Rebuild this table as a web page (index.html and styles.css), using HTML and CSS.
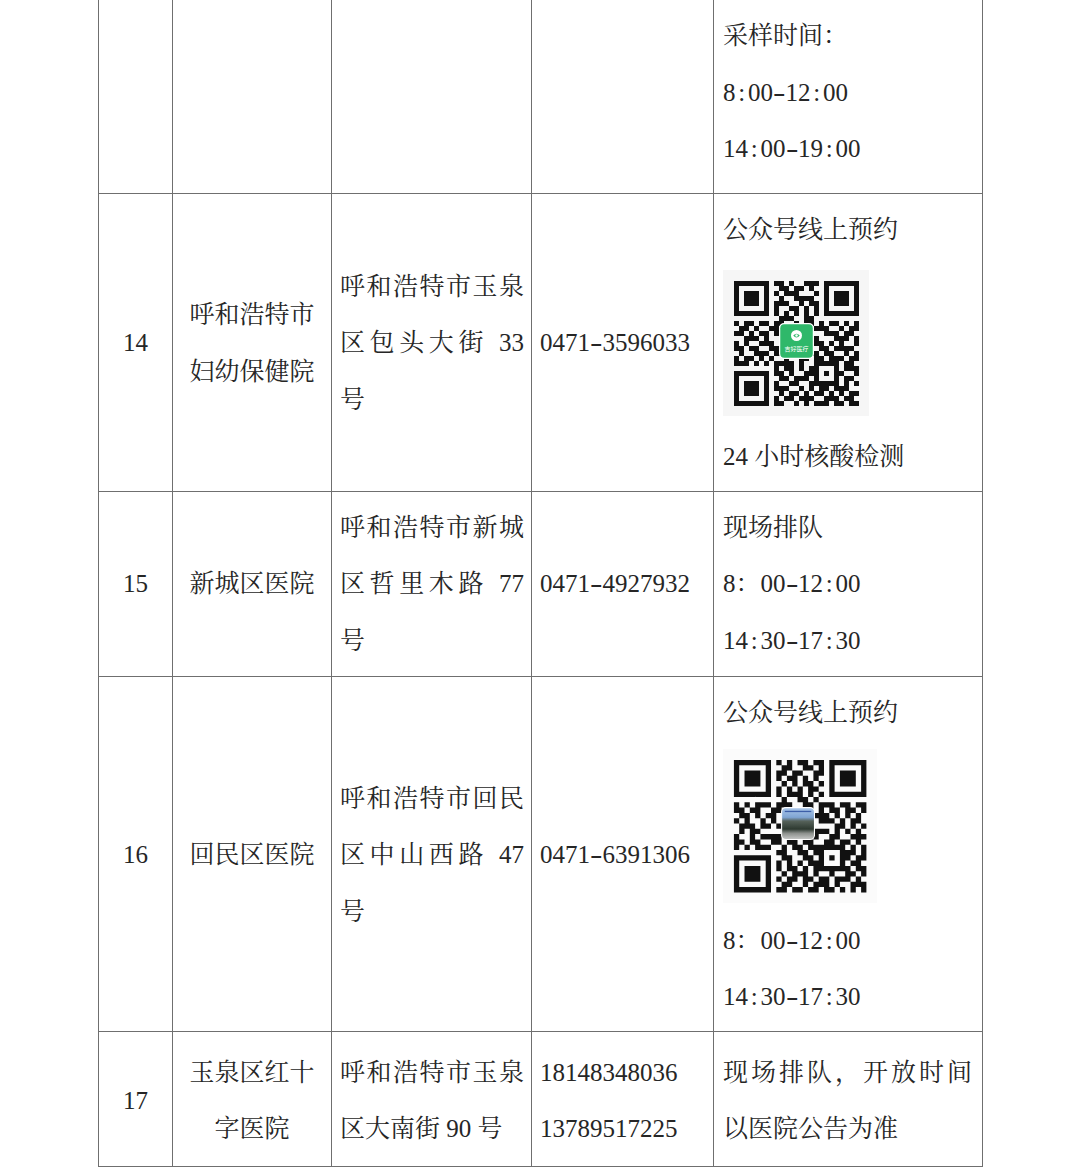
FILE: index.html
```html
<!DOCTYPE html>
<html lang="zh-CN">
<head>
<meta charset="utf-8">
<title>核酸检测机构</title>
<link rel="stylesheet" href="styles.css">
</head>
<body>
<table class="sheet">
  <colgroup>
    <col class="c-no"><col class="c-name"><col class="c-addr"><col class="c-tel"><col class="c-note">
  </colgroup>
  <tbody>
    <tr class="row-cont">
      <td class="no"></td>
      <td class="name"></td>
      <td class="addr"></td>
      <td class="tel"></td>
      <td class="note note-top">
        <p>采样时间：</p>
        <p>8<span class="sep">:</span>00<span class="sep dash">-</span>12<span class="sep">:</span>00</p>
        <p>14<span class="sep">:</span>00<span class="sep dash">-</span>19<span class="sep">:</span>00</p>
      </td>
    </tr>
    <tr class="row-qr">
      <td class="no">14</td>
      <td class="name">呼和浩特市妇幼保健院</td>
      <td class="addr">呼和浩特市玉泉区包头大街 33 号</td>
      <td class="tel">0471<span class="sep dash">-</span>3596033</td>
      <td class="note note-top">
        <p>公众号线上预约</p>
        <div class="qr qr-a">
          <svg width="146" height="146" viewBox="-2.2 -2.2 29.2 29.2">
            <rect x="-2.2" y="-2.2" width="29.2" height="29.2" fill="#f6f6f6"/>
            <path id="qr-modules" fill="#111" d="M0 0h7v1h-7zM8 0h2v1h-2zM11 0h1v1h-1zM14 0h3v1h-3zM18 0h7v1h-7zM0 1h1v1h-1zM6 1h1v1h-1zM9 1h2v1h-2zM12 1h2v1h-2zM15 1h1v1h-1zM18 1h1v1h-1zM24 1h1v1h-1zM0 2h1v1h-1zM2 2h3v1h-3zM6 2h1v1h-1zM8 2h1v1h-1zM10 2h3v1h-3zM16 2h1v1h-1zM18 2h1v1h-1zM20 2h3v1h-3zM24 2h1v1h-1zM0 3h1v1h-1zM2 3h3v1h-3zM6 3h1v1h-1zM9 3h1v1h-1zM12 3h4v1h-4zM18 3h1v1h-1zM20 3h3v1h-3zM24 3h1v1h-1zM0 4h1v1h-1zM2 4h3v1h-3zM6 4h1v1h-1zM8 4h3v1h-3zM13 4h1v1h-1zM15 4h2v1h-2zM18 4h1v1h-1zM20 4h3v1h-3zM24 4h1v1h-1zM0 5h1v1h-1zM6 5h1v1h-1zM8 5h1v1h-1zM11 5h2v1h-2zM14 5h1v1h-1zM16 5h1v1h-1zM18 5h1v1h-1zM24 5h1v1h-1zM0 6h7v1h-7zM8 6h1v1h-1zM10 6h1v1h-1zM12 6h1v1h-1zM14 6h1v1h-1zM16 6h1v1h-1zM18 6h7v1h-7zM9 7h3v1h-3zM14 7h2v1h-2zM0 8h1v1h-1zM2 8h2v1h-2zM5 8h2v1h-2zM8 8h2v1h-2zM12 8h1v1h-1zM14 8h2v1h-2zM17 8h1v1h-1zM19 8h2v1h-2zM22 8h1v1h-1zM24 8h1v1h-1zM1 9h2v1h-2zM4 9h1v1h-1zM7 9h2v1h-2zM10 9h2v1h-2zM13 9h1v1h-1zM16 9h3v1h-3zM21 9h1v1h-1zM23 9h2v1h-2zM0 10h2v1h-2zM3 10h1v1h-1zM5 10h2v1h-2zM8 10h2v1h-2zM11 10h2v1h-2zM14 10h2v1h-2zM18 10h3v1h-3zM22 10h2v1h-2zM2 11h3v1h-3zM6 11h1v1h-1zM9 11h2v1h-2zM12 11h2v1h-2zM15 11h2v1h-2zM20 11h3v1h-3zM24 11h1v1h-1zM0 12h1v1h-1zM2 12h1v1h-1zM5 12h3v1h-3zM9 12h1v1h-1zM12 12h3v1h-3zM16 12h2v1h-2zM19 12h1v1h-1zM21 12h1v1h-1zM24 12h1v1h-1zM0 13h2v1h-2zM3 13h2v1h-2zM7 13h2v1h-2zM10 13h2v1h-2zM14 13h2v1h-2zM17 13h2v1h-2zM20 13h4v1h-4zM1 14h1v1h-1zM4 14h3v1h-3zM8 14h2v1h-2zM11 14h2v1h-2zM15 14h2v1h-2zM18 14h2v1h-2zM22 14h1v1h-1zM24 14h1v1h-1zM0 15h1v1h-1zM2 15h2v1h-2zM5 15h1v1h-1zM7 15h1v1h-1zM10 15h1v1h-1zM13 15h2v1h-2zM16 15h2v1h-2zM19 15h3v1h-3zM23 15h2v1h-2zM0 16h3v1h-3zM4 16h1v1h-1zM6 16h1v1h-1zM8 16h4v1h-4zM13 16h1v1h-1zM16 16h5v1h-5zM22 16h2v1h-2zM8 17h1v1h-1zM10 17h2v1h-2zM13 17h1v1h-1zM15 17h2v1h-2zM20 17h1v1h-1zM22 17h3v1h-3zM0 18h7v1h-7zM8 18h2v1h-2zM11 18h1v1h-1zM14 18h3v1h-3zM18 18h1v1h-1zM20 18h2v1h-2zM24 18h1v1h-1zM0 19h1v1h-1zM6 19h1v1h-1zM9 19h2v1h-2zM12 19h3v1h-3zM16 19h1v1h-1zM20 19h1v1h-1zM22 19h2v1h-2zM0 20h1v1h-1zM2 20h3v1h-3zM6 20h1v1h-1zM8 20h1v1h-1zM11 20h2v1h-2zM15 20h6v1h-6zM22 20h1v1h-1zM24 20h1v1h-1zM0 21h1v1h-1zM2 21h3v1h-3zM6 21h1v1h-1zM8 21h3v1h-3zM13 21h1v1h-1zM15 21h1v1h-1zM17 21h2v1h-2zM20 21h3v1h-3zM0 22h1v1h-1zM2 22h3v1h-3zM6 22h1v1h-1zM9 22h1v1h-1zM11 22h2v1h-2zM14 22h1v1h-1zM16 22h2v1h-2zM19 22h1v1h-1zM21 22h1v1h-1zM23 22h2v1h-2zM0 23h1v1h-1zM6 23h1v1h-1zM8 23h1v1h-1zM10 23h2v1h-2zM13 23h3v1h-3zM18 23h3v1h-3zM22 23h2v1h-2zM0 24h7v1h-7zM8 24h2v1h-2zM12 24h1v1h-1zM14 24h1v1h-1zM16 24h3v1h-3zM20 24h2v1h-2zM23 24h2v1h-2z"/>
            <rect x="9" y="8.4" width="7" height="7.2" rx="1" fill="#fff"/>
            <rect x="9.25" y="8.65" width="6.5" height="6.7" rx="0.8" fill="#2fb86a"/>
            <circle cx="12.5" cy="10.9" r="1.1" fill="#fff"/>
            <path d="M11.85 10.9Q12.5 10.15 13.15 10.9Q12.5 11.65 11.85 10.9z" fill="#2fb86a"/>
            <circle cx="12.5" cy="10.9" r="0.25" fill="#fff"/>
            <text class="logo-text" x="12.5" y="14" text-anchor="middle">吉好医疗</text>
          </svg>
        </div>
        <p>24 小时核酸检测</p>
      </td>
    </tr>
    <tr>
      <td class="no">15</td>
      <td class="name">新城区医院</td>
      <td class="addr">呼和浩特市新城区哲里木路 77 号</td>
      <td class="tel">0471<span class="sep dash">-</span>4927932</td>
      <td class="note">
        <p>现场排队</p>
        <p>8：00<span class="sep dash">-</span>12<span class="sep">:</span>00</p>
        <p>14<span class="sep">:</span>30<span class="sep dash">-</span>17<span class="sep">:</span>30</p>
      </td>
    </tr>
    <tr class="row-qr">
      <td class="no">16</td>
      <td class="name">回民区医院</td>
      <td class="addr">呼和浩特市回民区中山西路 47 号</td>
      <td class="tel">0471<span class="sep dash">-</span>6391306</td>
      <td class="note note-top">
        <p>公众号线上预约</p>
        <div class="qr qr-b">
          <svg width="154" height="154" viewBox="-2.06 -2.06 29.06 29.06">
            <defs>
              <linearGradient id="photo" x1="0" y1="0" x2="0" y2="1">
                <stop offset="0" stop-color="#a9c6ea"/>
                <stop offset="0.3" stop-color="#7fa4d2"/>
                <stop offset="0.42" stop-color="#56625a"/>
                <stop offset="0.68" stop-color="#2e3a31"/>
                <stop offset="0.82" stop-color="#8d918d"/>
                <stop offset="1" stop-color="#c2c4c2"/>
              </linearGradient>
            </defs>
            <rect x="-2.06" y="-2.06" width="29.06" height="29.06" fill="#fbfbfb"/>
            <g transform="matrix(0 1 1 0 0 0)">
              <use href="#qr-modules"/>
            </g>
            <rect x="8.9" y="8.9" width="6.4" height="6.2" rx="0.9" fill="#fff"/>
            <rect x="9.1" y="9.1" width="6" height="5.8" rx="0.7" fill="url(#photo)"/>
            <rect x="9.6" y="9.6" width="5" height="0.25" fill="#3d5fa8"/>
          </svg>
        </div>
        <p>8：00<span class="sep dash">-</span>12<span class="sep">:</span>00</p>
        <p>14<span class="sep">:</span>30<span class="sep dash">-</span>17<span class="sep">:</span>30</p>
      </td>
    </tr>
    <tr class="row-last">
      <td class="no">17</td>
      <td class="name">玉泉区红十字医院</td>
      <td class="addr">呼和浩特市玉泉区大南街 90 号</td>
      <td class="tel">18148348036<br>13789517225</td>
      <td class="note">现场排队，开放时间以医院公告为准</td>
    </tr>
  </tbody>
</table>
</body>
</html>
```

FILE: styles.css
```css
html, body {
  margin: 0;
  padding: 0;
  background: #ffffff;
}

body {
  font-family: "Liberation Serif", "Noto Serif CJK SC", "Noto Sans CJK SC", serif;
  font-size: 25px;
  color: #262626;
}

.sheet {
  border-collapse: collapse;
  table-layout: fixed;
  width: 884px;
  margin-left: 98px;
}

.c-no { width: 74px; }
.c-name { width: 159px; }
.c-addr { width: 200px; }
.c-tel { width: 182px; }
.c-note { width: 269px; }

.sheet td {
  border: 1px solid #6f6f6f;
  padding: 8px 7px 7px 8px;
  line-height: 56.5px;
  vertical-align: middle;
}

.sheet p {
  margin: 0;
}

.sep {
  display: inline-block;
  width: 0.5em;
  text-align: center;
}

.sep.dash {
  transform: scaleX(1.5);
}

.sheet td.no {
  text-align: center;
  padding-left: 4px;
  padding-right: 4px;
}

.sheet td.name {
  text-align: center;
  padding-left: 9px;
  padding-right: 9px;
}

.sheet td.addr {
  text-align: justify;
  padding-left: 8px;
  padding-right: 7px;
}

.sheet td.tel {
  text-align: left;
  padding-left: 8px;
  padding-right: 4px;
}

.sheet td.note {
  text-align: justify;
  padding-left: 9px;
  padding-right: 10px;
}

.sheet td.note-top {
  vertical-align: top;
}

.row-cont td {
  border-top: none;
  padding-bottom: 15px;
}

.row-qr td {
  padding-bottom: 5px;
}

.row-last td {
  padding-top: 13px;
  padding-bottom: 8px;
}

.qr {
  box-sizing: border-box;
  height: 171px;
  line-height: 0;
}

.qr svg {
  display: block;
}

.qr-a {
  padding-top: 12px;
}

.qr-b {
  padding-top: 7px;
}

.logo-text {
  font-family: "Noto Sans CJK SC", sans-serif;
  font-size: 1.2px;
  fill: #ffffff;
}
```
